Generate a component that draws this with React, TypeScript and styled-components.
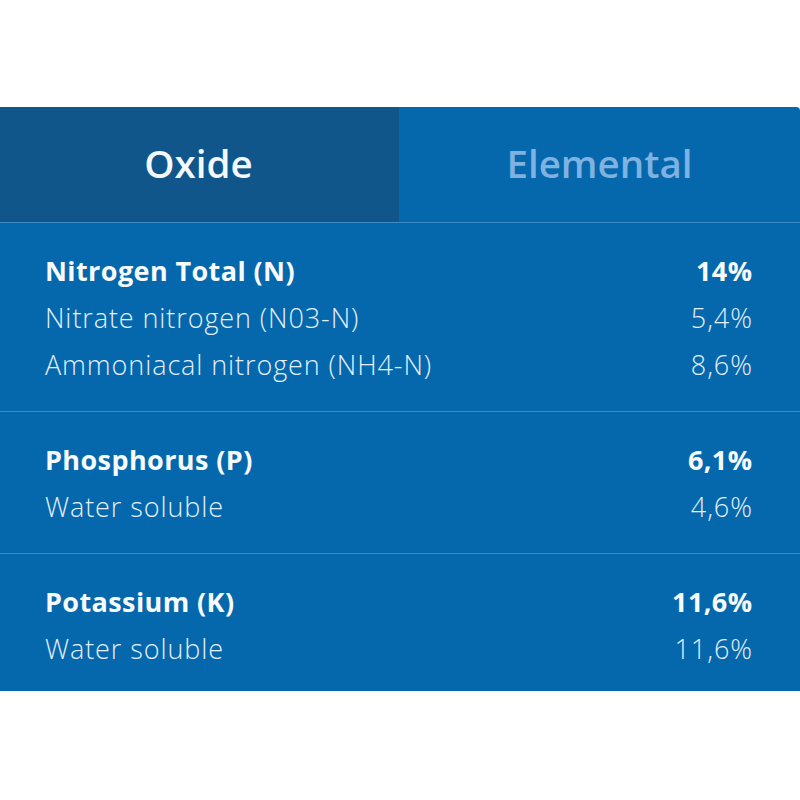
import React from "react";
import styled, { createGlobalStyle } from "styled-components";

const Global = createGlobalStyle`
  html, body { margin: 0; padding: 0; background: #ffffff; }
  body { font-family: "Open Sans", "Noto Sans", sans-serif; }
`;

const Panel = styled.div`
  margin-top: 107px;
  width: 800px;
  background: #0567ac;
  border-top-right-radius: 4px;
  overflow: hidden;
`;

const Tabs = styled.div`
  display: grid;
  grid-template-columns: 399px 1fr;
  height: 115px;
  border-bottom: 1px solid #3d88c6;
`;

const Tab = styled.div<{ $active?: boolean }>`
  display: flex;
  align-items: center;
  justify-content: center;
  background: ${(p) => (p.$active ? "#10568a" : "transparent")};
  color: ${(p) => (p.$active ? "#f4f9fd" : "#7fb2e0")};
  font-size: 38.5px;
  font-weight: 600;
  padding-bottom: 3px;
  padding-right: ${(p) => (p.$active ? "2px" : "0")};
`;

const Section = styled.div<{ $last?: boolean }>`
  padding: 24px 48px ${(p) => (p.$last ? "19px" : "23px")} 45px;
  border-bottom: ${(p) => (p.$last ? "none" : "1px solid #3d88c6")};
`;

const Row = styled.div<{ $head?: boolean }>`
  display: flex;
  justify-content: space-between;
  align-items: center;
  height: 47px;
  font-size: 27px;
  color: ${(p) => (p.$head ? "#f7fbfe" : "#e3effa")};
  font-weight: ${(p) => (p.$head ? 700 : 300)};
  letter-spacing: ${(p) => (p.$head ? "0.4px" : "0.9px")};
  margin-right: ${(p) => (p.$head ? "-0.4px" : "-0.9px")};
`;

type Item = { label: string; value: string };
type Group = { head: Item; rows: Item[] };

const groups: Group[] = [
  {
    head: { label: "Nitrogen Total (N)", value: "14%" },
    rows: [
      { label: "Nitrate nitrogen (N03-N)", value: "5,4%" },
      { label: "Ammoniacal nitrogen (NH4-N)", value: "8,6%" },
    ],
  },
  {
    head: { label: "Phosphorus (P)", value: "6,1%" },
    rows: [{ label: "Water soluble", value: "4,6%" }],
  },
  {
    head: { label: "Potassium (K)", value: "11,6%" },
    rows: [{ label: "Water soluble", value: "11,6%" }],
  },
];

export default function App() {
  return (
    <>
      <Global />
      <Panel>
        <Tabs>
          <Tab $active>Oxide</Tab>
          <Tab>Elemental</Tab>
        </Tabs>
        {groups.map((g, i) => (
          <Section key={i} $last={i === groups.length - 1}>
            <Row $head>
              <span>{g.head.label}</span>
              <span>{g.head.value}</span>
            </Row>
            {g.rows.map((r, j) => (
              <Row key={j}>
                <span>{r.label}</span>
                <span>{r.value}</span>
              </Row>
            ))}
          </Section>
        ))}
      </Panel>
    </>
  );
}
